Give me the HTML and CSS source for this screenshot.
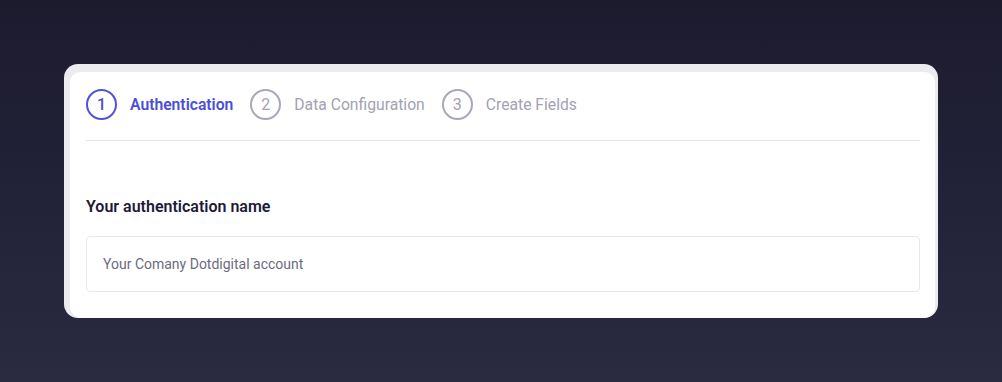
FILE: index.html
```html
<!DOCTYPE html>
<html lang="en">
<head>
    <meta charset="UTF-8">
    <title>Authentication</title>
    <link rel="stylesheet" href="styles.css">
</head>
<body>
    <div class="frame">
        <div class="panel">
            <div class="steps">
                <div class="step active">
                    <span class="step-num">1</span>
                    <span class="step-label">Authentication</span>
                </div>
                <div class="step">
                    <span class="step-num">2</span>
                    <span class="step-label">Data Configuration</span>
                </div>
                <div class="step">
                    <span class="step-num">3</span>
                    <span class="step-label">Create Fields</span>
                </div>
            </div>

            <div class="field">
                <label class="field-label">Your authentication name</label>
                <div class="field-input">Your Comany Dotdigital account</div>
            </div>
        </div>
    </div>
</body>
</html>
```

FILE: styles.css
```css
/* page */
html, body {
    height: 100%;
}
body {
    margin: 0;
    padding: 64px 0 0 64px;
    box-sizing: border-box;
    background: linear-gradient(180deg, #1c1b2e 0%, #23233a 60%, #2a2a40 100%);
    font-family: Roboto, "Liberation Sans", sans-serif;
}
.frame {
    width: 874px;
    height: 254px;
    box-sizing: border-box;
    background-color: #ebebf0;
    border-radius: 14px;
    padding: 8px 3px 0 6px;
    display: flex;
}
.panel {
    flex: 1;
    background-color: #fff;
    border-radius: 10px 10px 12px 12px;
    padding: 17px 15px 0 16px;
}
.steps {
    display: flex;
    gap: 17px;
    padding-bottom: 20px;
    border-bottom: 1px solid #e3e3e8;
}
.step {
    display: flex;
    align-items: center;
    gap: 13px;
    color: #a3a1b3;
    font-size: 15.7px;
}
.step-num {
    width: 31px;
    height: 31px;
    box-sizing: border-box;
    border: 2px solid #a9a7b8;
    border-radius: 50%;
    display: flex;
    align-items: center;
    justify-content: center;
    font-size: 16px;
}
.step.active {
    color: #4a4ed8;
}
.step.active .step-num {
    border-color: #4f53dc;
    font-weight: 500;
}
.step.active .step-label {
    font-weight: 600;
}
.field {
    padding-top: 56px;
}
.field-label {
    display: block;
    font-size: 16px;
    font-weight: 600;
    color: #1d1a38;
    line-height: 20px;
    margin-bottom: 19px;
}
.field-input {
    height: 56px;
    box-sizing: border-box;
    border: 1px solid #e7e7ec;
    border-radius: 4px;
    padding: 0 16px;
    display: flex;
    align-items: center;
    font-size: 14px;
    color: #6c6b7f;
}
```
